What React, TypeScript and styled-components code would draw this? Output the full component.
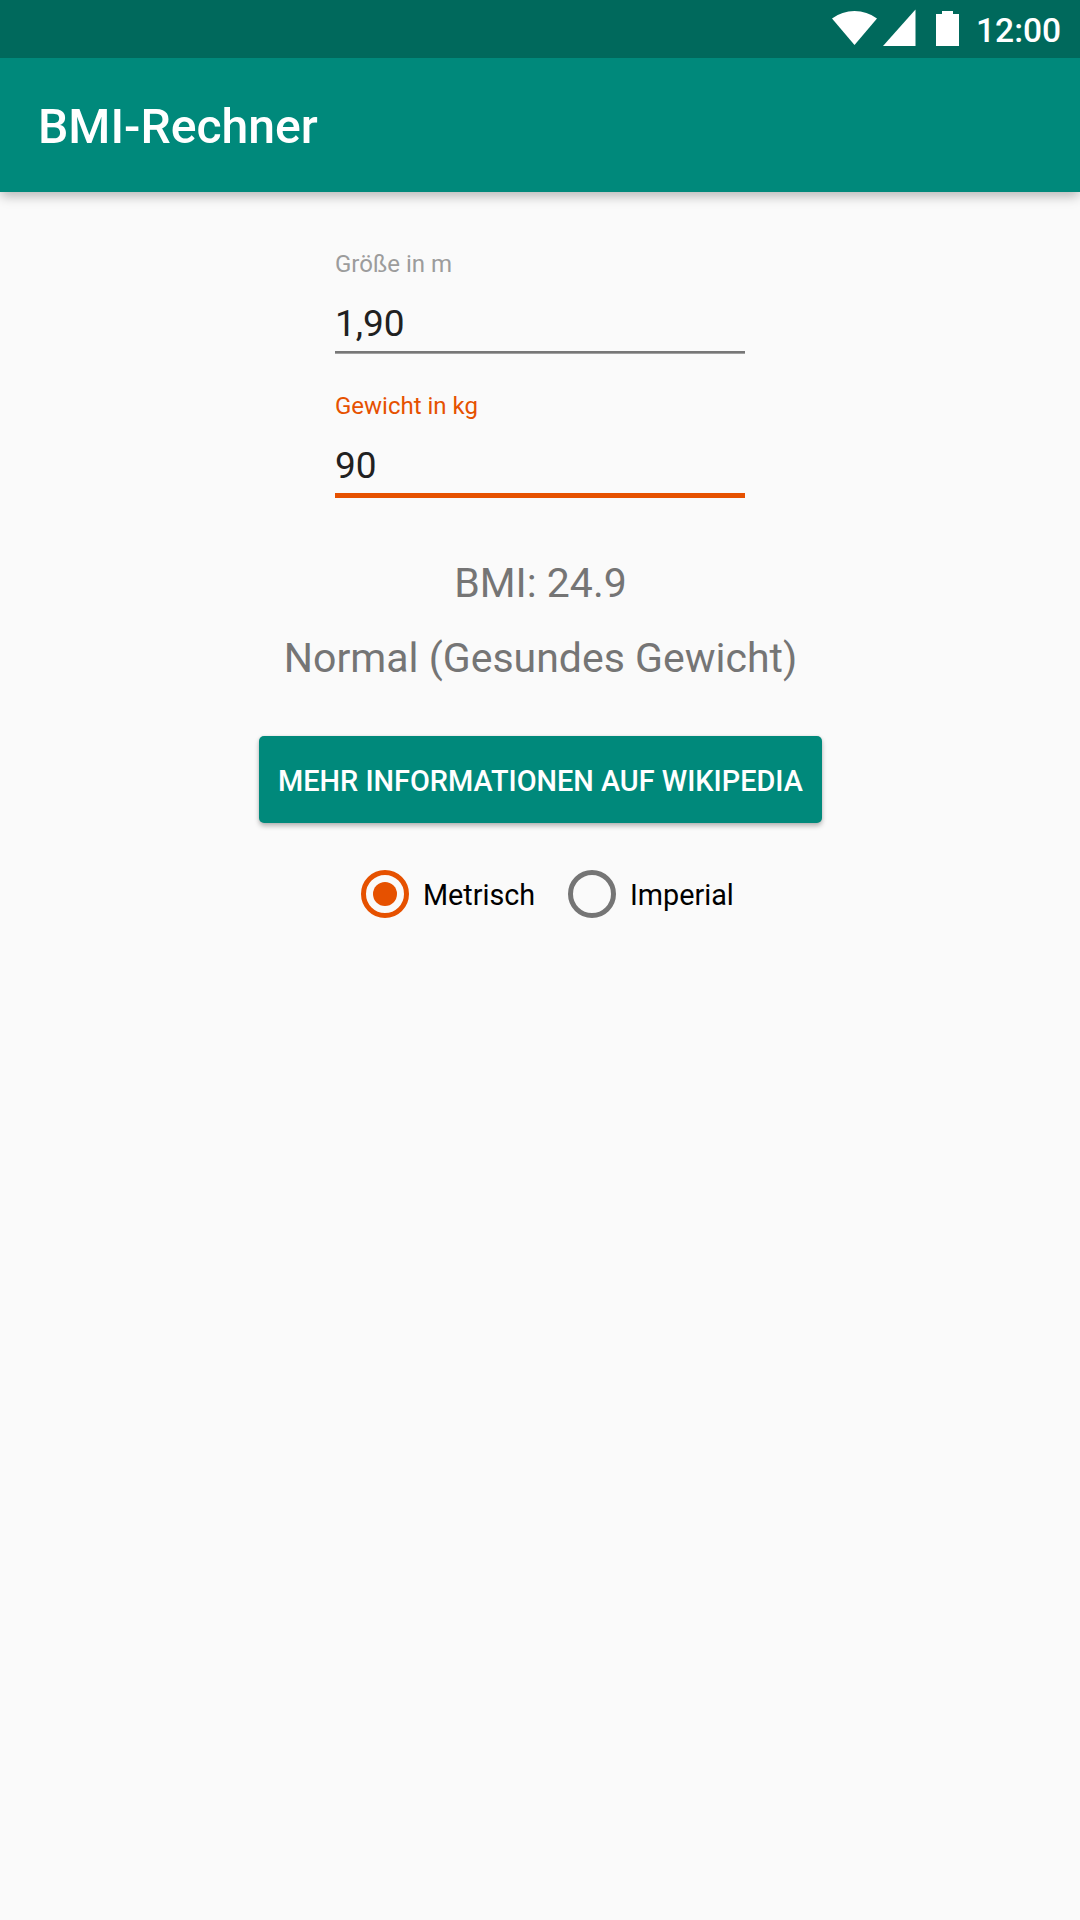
import React, { useState } from "react";
import styled, { createGlobalStyle } from "styled-components";

const GlobalStyle = createGlobalStyle`
  body { margin: 0; background: #fafafa; font-family: Roboto, sans-serif; }
`;

const Screen = styled.div`
  width: 1080px;
  height: 1920px;
  display: flex;
  flex-direction: column;
  background: #fafafa;
  overflow: hidden;
`;

const StatusBar = styled.div`
  height: 58px;
  flex: none;
  display: flex;
  justify-content: flex-end;
  position: relative;
  z-index: 1;
  background: #00695c;
`;

const StatusIcons = styled.svg`
  display: block;
  width: 144px;
  height: 58px;
`;

const Clock = styled.span`
  width: 104px;
  box-sizing: border-box;
  color: #fff;
  font-size: 33.6px;
  font-weight: 500;
  line-height: 62px;
`;

const AppBar = styled.header`
  height: 134px;
  box-sizing: border-box;
  flex: none;
  display: flex;
  align-items: center;
  padding: 4px 0 0 38px;
  background: #00897b;
  box-shadow: 0 5px 11px -1px rgba(0, 0, 0, 0.28);
`;

const Title = styled.h1`
  margin: 0;
  color: #fff;
  font-size: 48.125px;
  font-weight: 500;
  line-height: 56px;
`;

const Content = styled.main`
  display: flex;
  flex-direction: column;
  align-items: center;
  padding-top: 57px;
`;

const Field = styled.label<{ $active?: boolean }>`
  width: 410px;
  height: 142px;
  display: flex;
  flex-direction: column;
  color: ${(p) => (p.$active ? "#e65100" : "#9c9c9c")};
  font-size: 24px;
  line-height: 30px;
`;

const Input = styled.input<{ $active?: boolean }>`
  width: 410px;
  height: 56px;
  box-sizing: content-box;
  margin: 0;
  padding: 16px 0 0;
  border: 0;
  outline: 0;
  border-bottom: ${(p) => (p.$active ? "5px solid #e65100" : "2px solid #777")};
  box-shadow: ${(p) => (p.$active ? "none" : "0 1px 0 #a0a0a0")};
  background: transparent;
  color: #212121;
  font: 400 37px/44px Roboto, sans-serif;
`;

const Results = styled.section`
  margin-top: 13px;
  padding-left: 1px;
  text-align: center;
`;

const Result = styled.p`
  margin: 0;
  color: #757575;
  font-size: 41px;
  line-height: 75px;
`;

const InfoButton = styled.button`
  width: 563px;
  height: 87px;
  margin: 40px 0 0 1px;
  padding: 3px 0 0;
  border: 0;
  border-radius: 5px;
  background: #00897b;
  box-shadow: 0 3px 5px rgba(0, 0, 0, 0.27), 0 0 3px rgba(0, 0, 0, 0.08);
  color: #fff;
  font: 500 28.875px/34px Roboto, sans-serif;
  white-space: nowrap;
`;

const Options = styled.div`
  display: flex;
  gap: 32px;
  margin-top: 45px;
  margin-left: 24px;
`;

const Option = styled.button`
  width: 175px;
  display: flex;
  align-items: center;
  gap: 14px;
  padding: 0;
  border: 0;
  background: transparent;
  color: #000;
  font: 400 28.75px/50px Roboto, sans-serif;
`;

const OptionLabel = styled.span`
  padding-top: 2px;
`;

const Ring = styled.span<{ $on: boolean }>`
  width: 48px;
  height: 48px;
  flex: none;
  box-sizing: border-box;
  display: flex;
  align-items: center;
  justify-content: center;
  border: 5px solid ${(p) => (p.$on ? "#e65100" : "#757575")};
  border-radius: 50%;
`;

const Dot = styled.span`
  width: 24px;
  height: 24px;
  border-radius: 50%;
  background: #e65100;
`;

export default function App() {
  const [height, setHeight] = useState("1,90");
  const [weight, setWeight] = useState("90");
  const [unit, setUnit] = useState("Metrisch");
  return (
    <Screen>
      <GlobalStyle />
      <StatusBar>
        <StatusIcons viewBox="832 0 144 58" fill="#fff">
          <path d="M854.5 45 832 18.5Q842 11 854.5 11T877 18.5Z" />
          <path d="M883 46H915.5V9.5Z" />
          <path d="M936 14H942V11H953V14H959V46H936Z" />
        </StatusIcons>
        <Clock>12:00</Clock>
      </StatusBar>
      <AppBar><Title>BMI-Rechner</Title></AppBar>
      <Content>
        <Field>
          Größe in m
          <Input value={height} onChange={(e) => setHeight(e.target.value)} />
        </Field>
        <Field $active>
          Gewicht in kg
          <Input $active value={weight} onChange={(e) => setWeight(e.target.value)} />
        </Field>
        <Results>
          <Result>BMI: 24.9</Result>
          <Result>Normal (Gesundes Gewicht)</Result>
        </Results>
        <InfoButton>MEHR INFORMATIONEN AUF WIKIPEDIA</InfoButton>
        <Options>
          {["Metrisch", "Imperial"].map((name) => (
            <Option key={name} onClick={() => setUnit(name)}>
              <Ring $on={unit === name}>{unit === name && <Dot />}</Ring>
              <OptionLabel>{name}</OptionLabel>
            </Option>
          ))}
        </Options>
      </Content>
    </Screen>
  );
}
